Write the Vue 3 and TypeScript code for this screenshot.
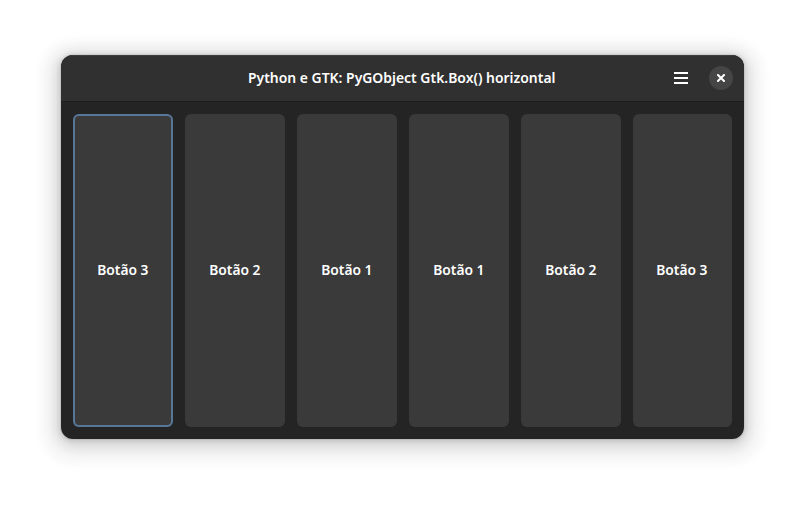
<script setup lang="ts">
const title = 'Python e GTK: PyGObject Gtk.Box() horizontal'
const buttons: string[] = ['Botão 3', 'Botão 2', 'Botão 1', 'Botão 1', 'Botão 2', 'Botão 3']
</script>

<template>
  <main class="desktop">
    <section class="window">
      <header class="headerbar">
        <h1 class="title"><span class="title-text">{{ title }}</span></h1>
        <button class="menu" aria-label="Menu">
          <svg width="14" height="12" viewBox="0 0 14 12" shape-rendering="crispEdges">
            <path d="M0 0h14v2H0zM0 5h14v2H0zM0 10h14v2H0z" fill="#fff" />
          </svg>
        </button>
        <button class="close" aria-label="Fechar">
          <svg width="8" height="8" viewBox="0 0 8 8">
            <path d="M1 1l6 6M7 1l-6 6" stroke="#fff" stroke-width="2" stroke-linecap="square" />
          </svg>
        </button>
      </header>
      <div class="box">
        <button v-for="(label, i) in buttons" :key="i" class="btn" :class="{ focused: i === 0 }">
          <span class="label">{{ label }}</span>
        </button>
      </div>
    </section>
  </main>
</template>

<style>
body {
  background: #fff;
}
</style>

<style scoped>
.desktop {
  box-sizing: border-box;
  width: 805px;
  height: 506px;
  padding: 55px 61px 67px;
  overflow: hidden;
  font-family: "Noto Sans", sans-serif;
  color: #fff;
}
.window {
  box-sizing: border-box;
  display: flex;
  flex-direction: column;
  width: 683px;
  height: 384px;
  border-radius: 12px;
  background: #242424;
  overflow: hidden;
  box-shadow:
    0 0 0 1px rgba(0, 0, 0, 0.05),
    0 1px 5px 1px rgba(0, 0, 0, 0.1),
    0 3px 14px 4px rgba(0, 0, 0, 0.12),
    0 5px 20px 10px rgba(0, 0, 0, 0.045),
    0 5px 10px 21px rgba(0, 0, 0, 0.025);
}
.headerbar {
  box-sizing: border-box;
  display: flex;
  align-items: center;
  height: 47px;
  padding-right: 11px;
  background: #303030;
  border-bottom: 1px solid #1e1e1e;
  box-shadow: inset 0 1px #3e3e3e;
}
.title {
  flex: 1;
  margin: 0 0 2px 187px;
  font-size: 15px;
  font-weight: 600;
  line-height: 20px;
  white-space: nowrap;
}
.title-text {
  display: inline-block;
  width: 0;
  transform: scaleX(0.928);
  transform-origin: 0 50%;
}
button {
  padding: 0;
  border: 0;
  color: inherit;
  font: inherit;
}
.menu {
  display: flex;
  margin-right: 21px;
  background: transparent;
}
.close {
  display: flex;
  align-items: center;
  justify-content: center;
  width: 24px;
  height: 24px;
  border-radius: 50%;
  background: #454545;
}
.box {
  flex: 1;
  display: grid;
  grid-template-columns: repeat(5, 100px) 99px;
  gap: 12px;
  padding: 12px;
}
.btn {
  display: flex;
  align-items: center;
  justify-content: center;
  border-radius: 6px;
  background: #3a3a3a;
  font-size: 15px;
  font-weight: 600;
  line-height: 20px;
}
.label {
  margin-bottom: 3px;
  transform: scaleX(0.92);
}
.btn:last-child .label {
  margin-right: 1px;
}
.focused {
  box-shadow: inset 0 0 0 2px #587698;
}
</style>
